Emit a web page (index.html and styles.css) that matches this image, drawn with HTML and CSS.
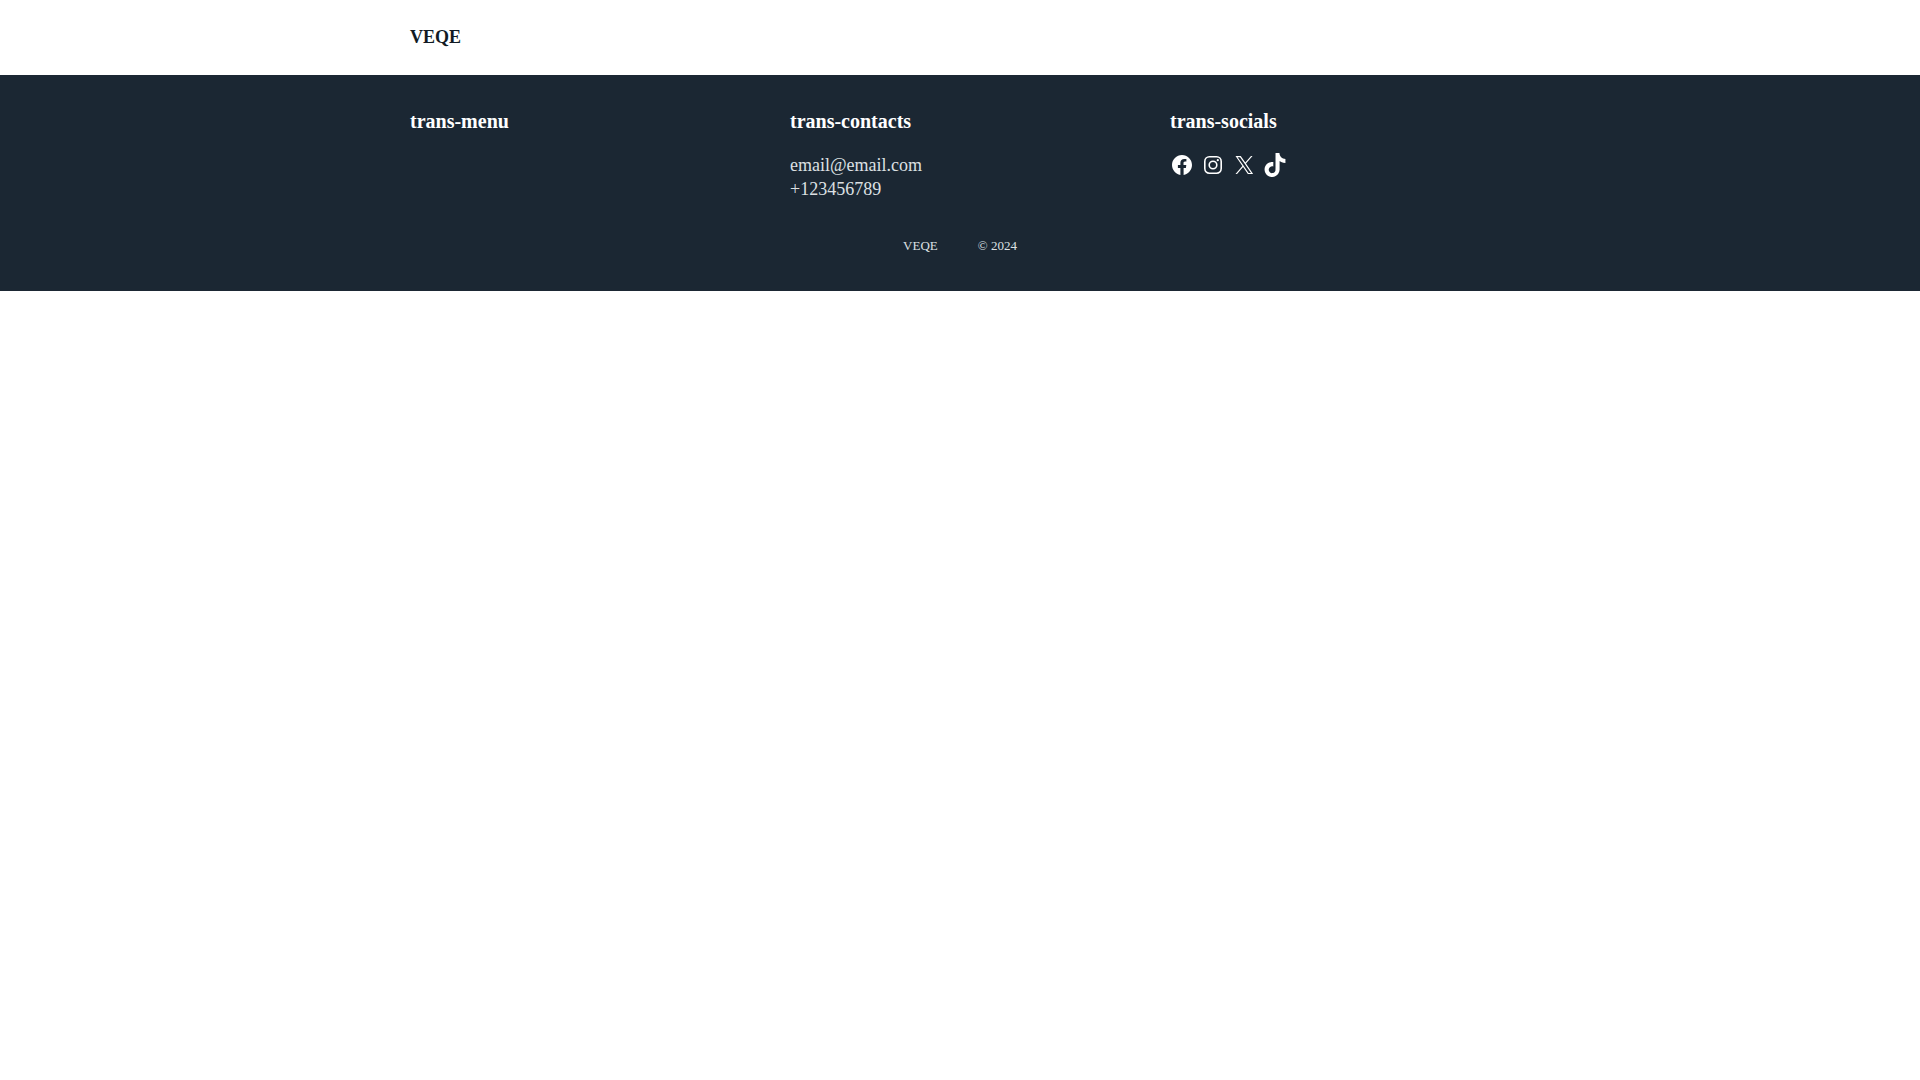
FILE: index.html
```html
<!DOCTYPE html>
<html lang="en">
<head>
    <meta charset="UTF-8">
    <meta name="viewport" content="width=device-width, initial-scale=1.0">
    <title>VEQE</title>
    <link rel="stylesheet" href="styles.css">
</head>
<body>

    <header class="header">
        <div class="container">
            <a class="logo" href="#">VEQE</a>
        </div>
    </header>

    <footer class="footer">
        <div class="container footer-columns">
            <div class="footer-column">
                <h2>trans-menu</h2>
            </div>
            <div class="footer-column">
                <h2>trans-contacts</h2>
                <a class="contact" href="mailto:email@email.com">email@email.com</a>
                <a class="contact" href="tel:+123456789">+123456789</a>
            </div>
            <div class="footer-column">
                <h2>trans-socials</h2>
                <div class="socials">
                    <a href="#" aria-label="Facebook">
                        <svg viewBox="0 0 24 24"><path d="M12 2C6.5 2 2 6.5 2 12c0 5 3.7 9.1 8.4 9.9v-7H7.9V12h2.5V9.8c0-2.5 1.5-3.9 3.8-3.9 1.1 0 2.2.2 2.2.2v2.5h-1.3c-1.2 0-1.6.8-1.6 1.6V12h2.8l-.4 2.9h-2.3v7C18.3 21.1 22 17 22 12c0-5.5-4.5-10-10-10z"/></svg>
                    </a>
                    <a href="#" aria-label="Instagram">
                        <svg viewBox="0 0 24 24">
                            <rect x="3.8" y="3.8" width="16.4" height="16.4" rx="4.6" fill="none" stroke="currentColor" stroke-width="1.6"/>
                            <circle cx="12" cy="12" r="3.8" fill="none" stroke="currentColor" stroke-width="1.6"/>
                            <circle cx="16.8" cy="7.2" r="1.1"/>
                        </svg>
                    </a>
                    <a href="#" aria-label="X">
                        <svg viewBox="0 0 24 24"><path d="M13.982 10.622 20.54 3h-1.554l-5.693 6.618L8.745 3H3.5l6.876 10.007L3.5 21h1.554l6.012-6.989L15.868 21h5.245l-7.131-10.378Zm-2.128 2.474-.697-.997-5.543-7.93H8l4.474 6.4.697.996 5.815 8.318h-2.387l-4.745-6.787Z"/></svg>
                    </a>
                    <a href="#" aria-label="TikTok">
                        <svg viewBox="0 0 32 32"><path d="M16.708 0.027c1.745-0.027 3.48-0.011 5.213-0.027 0.105 2.041 0.839 4.12 2.333 5.563 1.491 1.479 3.6 2.156 5.652 2.385v5.369c-1.923-0.063-3.855-0.463-5.6-1.291-0.76-0.344-1.468-0.787-2.161-1.24-0.009 3.896 0.016 7.787-0.025 11.667-0.104 1.864-0.719 3.719-1.803 5.255-1.744 2.557-4.771 4.224-7.88 4.276-1.907 0.109-3.812-0.411-5.437-1.369-2.693-1.588-4.588-4.495-4.864-7.615-0.032-0.667-0.043-1.333-0.016-1.984 0.24-2.537 1.495-4.964 3.443-6.615 2.208-1.923 5.301-2.839 8.197-2.297 0.027 1.975-0.052 3.948-0.052 5.923-1.323-0.428-2.869-0.308-4.025 0.495-0.844 0.547-1.485 1.385-1.819 2.333-0.276 0.676-0.197 1.427-0.181 2.145 0.317 2.188 2.421 4.027 4.667 3.828 1.489-0.016 2.916-0.88 3.692-2.145 0.251-0.443 0.532-0.896 0.547-1.417 0.131-2.385 0.079-4.76 0.095-7.145 0.011-5.375-0.016-10.735 0.025-16.093z"/></svg>
                    </a>
                </div>
            </div>
        </div>
        <div class="copyright">
            <span>VEQE</span>
            <span>© 2024</span>
        </div>
    </footer>

</body>
</html>
```
FILE: styles.css
```css
* {
    box-sizing: border-box;
}
body {
    font-family: "Liberation Serif", serif;
    font-size: 18px;
    line-height: 24px;
    background-color: #fff;
    color: #111b24;
    margin: 0;
}
a {
    color: inherit;
    text-decoration: none;
}
.container {
    max-width: 1140px;
    margin: 0 auto;
    padding: 0 20px;
}
.header {
    padding: 25px 0 26px;
}
.logo {
    display: block;
    font-weight: bold;
}
.footer {
    background-color: #1b2733;
    color: #fff;
    padding: 31px 0 35px;
}
.footer-columns {
    display: grid;
    grid-template-columns: repeat(3, 1fr);
    gap: 40px;
}
.footer-column h2 {
    font-size: 20px;
    line-height: 30px;
    margin: 0 0 17px;
}
.contact {
    display: block;
    color: #dde0e3;
}
.socials {
    display: flex;
    gap: 7px;
}
.socials a {
    display: block;
}
.socials svg {
    display: block;
    width: 24px;
    height: 24px;
    fill: currentColor;
}
.copyright {
    display: flex;
    justify-content: center;
    gap: 40px;
    margin-top: 35px;
    font-size: 13px;
    line-height: 20px;
    color: #dde0e3;
}
```
